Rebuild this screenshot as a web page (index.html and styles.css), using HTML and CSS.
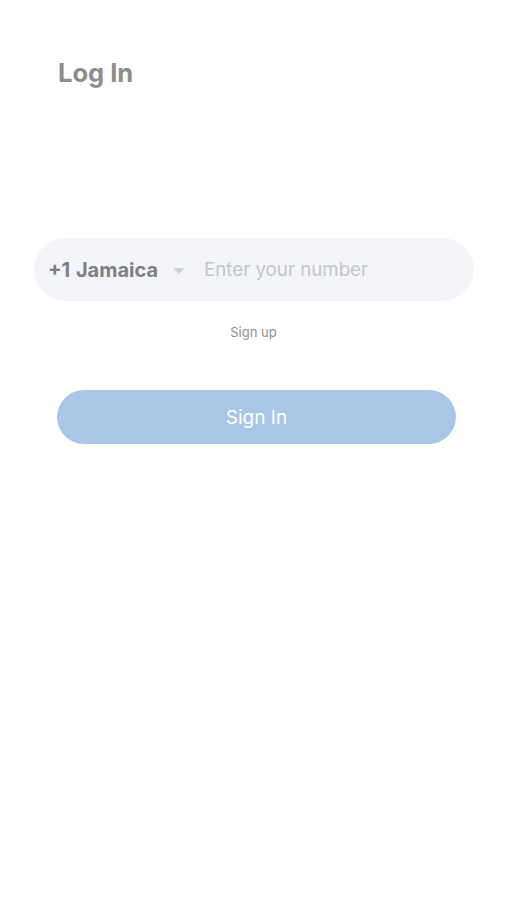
FILE: index.html
```html
<!DOCTYPE html>
<html>
	<head>
		<title>Log In</title>
		<link rel="stylesheet" href="styles.css">
	</head>
	<body>
		<div class="screen">
			<h1 class="title">Log In</h1>

			<div class="phoneField">
				<div class="country">
					<span class="countryName">+1 Jamaica</span>
					<span class="caret"></span>
				</div>
				<input class="number" type="text" placeholder="Enter your number" autocomplete="off">
			</div>

			<a class="signUp" href="#">Sign up</a>

			<button class="signIn">Sign In</button>
		</div>
	</body>
</html>
```

FILE: styles.css
```css
*
	{
		box-sizing: border-box;
	}
body
	{
		margin: 0;
		background-color: #ffffff;
		font-family: Inter, "Liberation Sans", Arial, sans-serif;
	}
.screen
	{
		display: flex;
		flex-direction: column;
		padding-top: 58px;
	}
.title
	{
		margin: 0 0 0 58px;
		font-size: 25.5px;
		font-weight: bold;
		color: #8b8d90;
		line-height: 30px;
	}
.phoneField
	{
		display: flex;
		align-items: center;
		width: 440px;
		height: 63px;
		margin: 150px 0 0 34px;
		padding-left: 14px;
		border-radius: 32px;
		background-color: #f3f5f8;
	}
.country
	{
		display: flex;
		align-items: center;
		flex-shrink: 0;
		white-space: nowrap;
	}
.countryName
	{
		font-size: 20px;
		font-weight: bold;
		color: #7e8083;
		word-spacing: 1px;
	}
.caret
	{
		width: 0;
		height: 0;
		margin: 2px 0 0 15px;
		border-left: 6px solid transparent;
		border-right: 6px solid transparent;
		border-top: 6px solid #cfd2d6;
	}
.number
	{
		flex: 1;
		min-width: 0;
		margin-left: 19px;
		border: none;
		outline: none;
		background: transparent;
		font-family: inherit;
		font-size: 18.7px;
		color: #555555;
		padding: 0;
	}
.number::placeholder
	{
		color: #c3c6ca;
	}
.signUp
	{
		align-self: center;
		margin-top: 23px;
		font-size: 13px;
		color: #8e9093;
		text-decoration: none;
	}
.signIn
	{
		width: 399px;
		height: 54px;
		margin: 50px 0 0 57px;
		border: none;
		border-radius: 27px;
		background-color: #a9c6e6;
		color: #ffffff;
		font-family: inherit;
		font-size: 19px;
	}
```
